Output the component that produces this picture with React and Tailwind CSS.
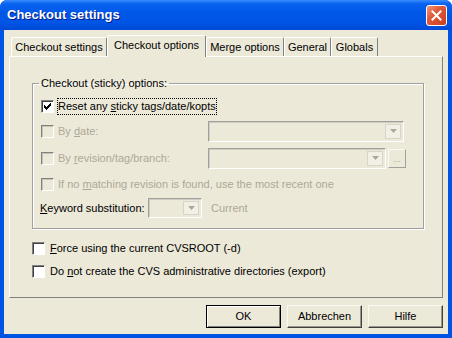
const UI = "font-['Liberation_Sans',Arial,sans-serif] text-[11px] leading-[13px]";

function CheckBox({ checked, disabled }) {
  return (
    <span
      className={`flex items-center justify-center w-[13px] h-[13px] shrink-0 border border-[#808080] border-r-white border-b-white ${
        disabled ? 'bg-[#ece9d8] shadow-[inset_1px_1px_0_#c8c4b4]' : 'bg-white shadow-[inset_1px_1px_0_#404040]'
      }`}
    >
      {checked && (
        <svg width="7" height="7" viewBox="0 0 7 7">
          <path d="M0 2h1v1h1v1h1V3h1V2h1V1h1V0h1v3H6v1H5v1H4v1H3v1H2V6H1V5H0z" fill="#000" />
        </svg>
      )}
    </span>
  );
}

function Arrow() {
  return (
    <svg width="7" height="4" viewBox="0 0 7 4">
      <path d="M0 0h7L3.5 4z" fill="#aca899" />
    </svg>
  );
}

function Combo({ className }) {
  return (
    <div className={`${className} flex justify-end p-[2px] border border-[#a0a0a0] border-r-white border-b-white shadow-[inset_1px_1px_0_#d0cdc0]`}>
      <div className="w-[16px] h-full flex items-center justify-center bg-[#f2f0e6] border border-[#d8d5c8]">
        <Arrow />
      </div>
    </div>
  );
}

function Key({ children }) {
  return <span className="underline underline-offset-[1px]">{children}</span>;
}

function Button({ children, isDefault }) {
  return (
    <button
      className={`w-[75px] h-[23px] flex items-center justify-center bg-[#ece9d8] ${
        isDefault
          ? 'border border-black shadow-[inset_1px_1px_0_#fff,inset_-1px_-1px_0_#808080]'
          : 'border border-[#f8f8f4] border-r-[#404040] border-b-[#404040] shadow-[inset_-1px_-1px_0_#9a978a]'
      }`}
    >
      {children}
    </button>
  );
}

export default function App() {
  const tabs = [
    { label: 'Checkout settings', w: 'w-[96px]' },
    { label: 'Checkout options', w: 'w-[99px]', active: true },
    { label: 'Merge options', w: 'w-[78px]' },
    { label: 'General', w: 'w-[47px]' },
    { label: 'Globals', w: 'w-[47px]' },
  ];

  return (
    <div className={`w-[452px] h-[338px] flex flex-col bg-[#0054e3] rounded-t-[7px] overflow-hidden text-black ${UI}`}>
      {/* title bar */}
      <div className="h-[30px] shrink-0 flex items-center justify-between pl-[7px] pr-[5px] bg-[linear-gradient(to_bottom,#3a8cff_0%,#0a64f0_12%,#0058e8_40%,#0055e5_75%,#0049d8_100%)]">
        <span className="text-white font-bold text-[13px] leading-[16px] [text-shadow:1px_1px_0_#0a1883]">Checkout settings</span>
        <div className="w-[21px] h-[21px] rounded-[3px] border border-white flex items-center justify-center bg-[linear-gradient(135deg,#f09878_0%,#e0583a_40%,#c8401f_100%)]">
          <svg width="11" height="11" viewBox="0 0 11 11">
            <path d="M1.5 1.5l8 8M9.5 1.5l-8 8" stroke="#fff" strokeWidth="2" strokeLinecap="square" />
          </svg>
        </div>
      </div>

      {/* body */}
      <div className="flex-1 mx-[4px] mb-[4px] bg-[#ece9d8] flex flex-col px-[5px] pt-[5px]">
        {/* tabs */}
        <div className="h-[21px] flex items-end pl-[2px]">
          {tabs.map((t) =>
            t.active ? (
              <div
                key={t.label}
                className={`${t.w} h-[22px] -mb-px relative z-10 bg-[#ece9d8] border-t border-l border-white border-r border-r-[#808080] rounded-t-[2px] flex justify-center pt-[3px]`}
              >
                {t.label}
              </div>
            ) : (
              <div
                key={t.label}
                className={`${t.w} h-[19px] bg-[#ece9d8] border-t border-l border-white border-r border-r-[#808080] rounded-t-[2px] flex justify-center pt-[3px]`}
              >
                {t.label}
              </div>
            )
          )}
        </div>

        {/* panel */}
        <div className="h-[242px] shrink-0 border border-white border-r-[#808080] border-b-[#808080] flex flex-col pl-[22px]">
          <fieldset className="mt-[20px] w-[392px] h-[152px] border border-[#a0a0a0] shadow-[inset_1px_1px_0_#fff,1px_1px_0_#fff]">
            <legend className="ml-[6px] px-[2px]">Checkout (sticky) options:</legend>
            <div className="flex flex-col pl-[8px]">
              <div className="h-[22px] mt-[5px] flex items-center">
                <CheckBox checked />
                <span className="ml-[3px] border border-dotted border-black py-[1px]">
                  Reset any <Key>s</Key>ticky tags/date/kopts
                </span>
              </div>
              <div className="h-[22px] mt-[3px] flex items-center text-[#aca899]">
                <div className="w-[167px] flex items-center">
                  <CheckBox disabled />
                  <span className="ml-[4px]">
                    By <Key>d</Key>ate:
                  </span>
                </div>
                <Combo className="w-[196px] h-[21px]" />
              </div>
              <div className="h-[22px] mt-[5px] flex items-center text-[#aca899]">
                <div className="w-[167px] flex items-center">
                  <CheckBox disabled />
                  <span className="ml-[4px]">
                    By <Key>r</Key>evision/tag/branch:
                  </span>
                </div>
                <Combo className="w-[178px] h-[21px]" />
                <div className="ml-[2px] w-[18px] h-[19px] border border-[#f8f8f4] border-r-[#a0a0a0] border-b-[#a0a0a0] flex items-end justify-center pb-[3px] text-[9px] leading-[9px]">
                  ...
                </div>
              </div>
              <div className="h-[22px] mt-[4px] flex items-center text-[#aca899]">
                <CheckBox disabled />
                <span className="ml-[4px]">
                  If no <Key>m</Key>atching revision is found, use the most recent one
                </span>
              </div>
              <div className="h-[22px] mt-[2px] flex items-center -ml-[1px]">
                <span className="w-[108px]">
                  <Key>K</Key>eyword substitution:
                </span>
                <Combo className="w-[54px] h-[20px]" />
                <span className="ml-[9px] text-[#aca899]">Current</span>
              </div>
            </div>
          </fieldset>

          <div className="h-[17px] mt-[11px] flex items-center">
            <CheckBox />
            <span className="ml-[5px]">
              <Key>F</Key>orce using the current CVSROOT (-d)
            </span>
          </div>
          <div className="h-[17px] mt-[6px] flex items-center">
            <CheckBox />
            <span className="ml-[5px]">
              Do <Key>n</Key>ot create the CVS administrative directories (export)
            </span>
          </div>
        </div>

        {/* buttons */}
        <div className="mt-[7px] flex justify-end gap-[6px]">
          <Button isDefault>OK</Button>
          <Button>Abbrechen</Button>
          <Button>Hilfe</Button>
        </div>
      </div>
    </div>
  );
}
